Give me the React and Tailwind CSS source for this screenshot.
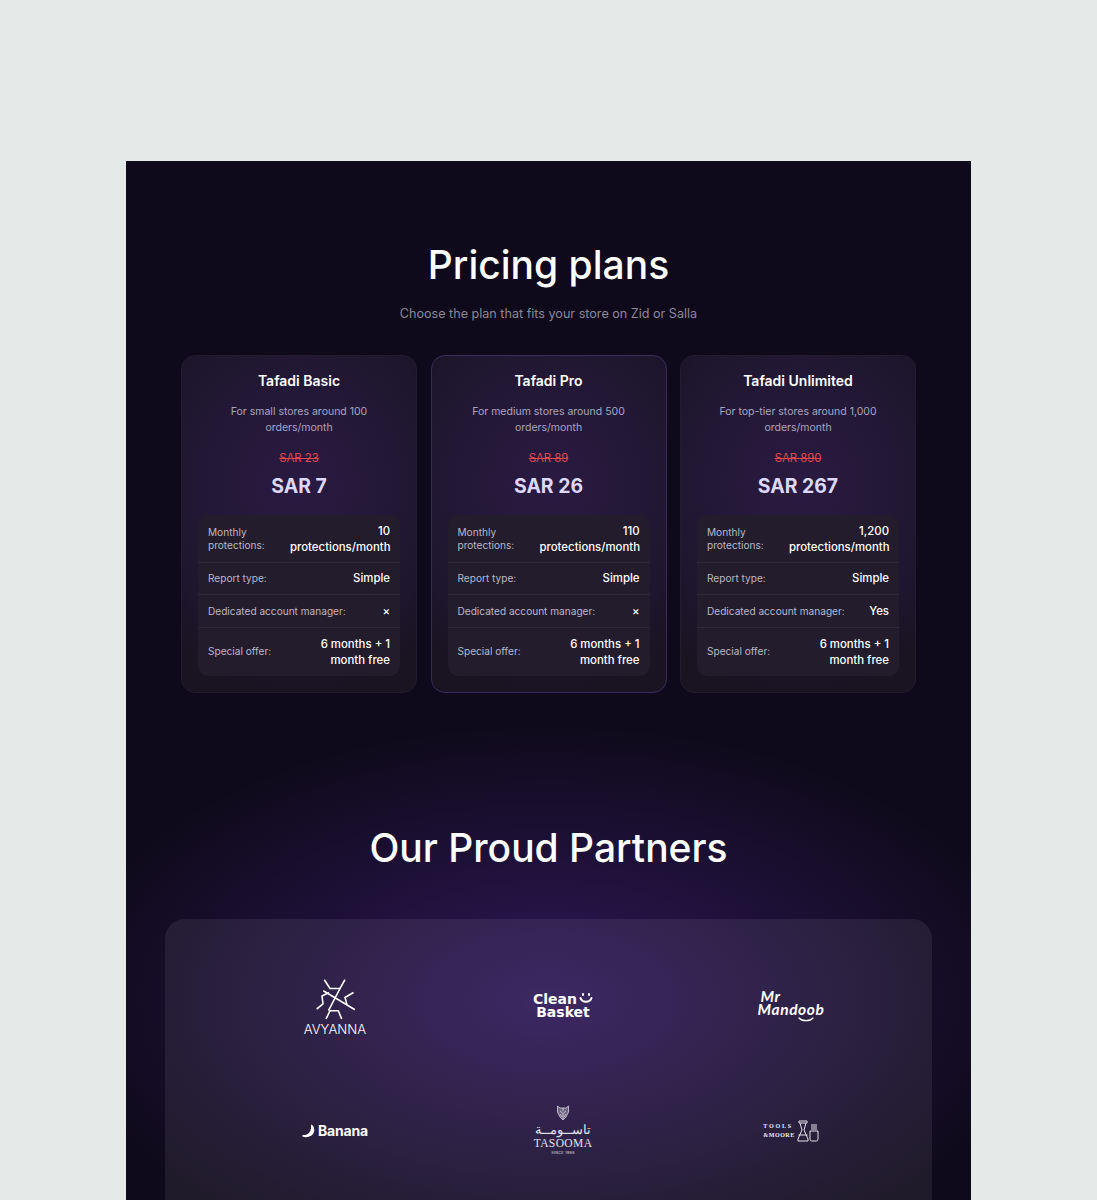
const plans = [
  {
    name: "Tafadi Basic",
    desc: "For small stores around 100 orders/month",
    oldPrice: "SAR 23",
    price: "SAR 7",
    count: "10",
    manager: "×",
  },
  {
    name: "Tafadi Pro",
    desc: "For medium stores around 500 orders/month",
    oldPrice: "SAR 89",
    price: "SAR 26",
    count: "110",
    manager: "×",
    featured: true,
  },
  {
    name: "Tafadi Unlimited",
    desc: "For top-tier stores around 1,000 orders/month",
    oldPrice: "SAR 890",
    price: "SAR 267",
    count: "1,200",
    manager: "Yes",
  },
];

function PlanCard({ plan }) {
  return (
    <div
      className={`rounded-[14px] border bg-[radial-gradient(ellipse_190px_210px_at_50%_38%,#2a1a42,#1f1730_70%,#191322)] px-4 pt-[15px] pb-4 ${
        plan.featured ? "border-[#3a2d5c]" : "border-[#231b30]"
      }`}
    >
      <h3 className="text-center text-[14px] leading-5 font-semibold text-white">{plan.name}</h3>
      <p className="mx-auto mt-[13px] max-w-[180px] text-center text-[10.5px] leading-4 text-[#aba5bf]">{plan.desc}</p>
      <p className="mt-[14px] text-center text-[11.3px] leading-4 text-[#e5484d] line-through">{plan.oldPrice}</p>
      <p className="mt-[6px] text-center text-[19.4px] leading-7 font-bold text-[#ddd8fb]">{plan.price}</p>

      <div className="mt-[15px] rounded-[10px] bg-[#221c2d] text-[10.1px] text-[#bcb8c6]">
        <div className="flex h-[48px] items-center justify-between border-b border-[#2e2838] px-[10px] pt-px">
          <span className="w-[60px] leading-[13px]">Monthly protections:</span>
          <span className="w-[100px] text-right text-[11.4px] leading-4 font-medium whitespace-pre-line text-white">
            {plan.count}
            {"\n"}protections/month
          </span>
        </div>
        <div className="flex h-[32px] items-center justify-between border-b border-[#2e2838] px-[10px] pt-px">
          <span>Report type:</span>
          <span className="text-[11.4px] font-medium text-white">Simple</span>
        </div>
        <div className="flex h-[33px] items-center justify-between border-b border-[#2e2838] px-[10px] pt-px">
          <span>Dedicated account manager:</span>
          <span className="text-[11.4px] font-medium text-white">{plan.manager}</span>
        </div>
        <div className="flex h-[48px] items-center justify-between px-[10px]">
          <span>Special offer:</span>
          <span className="w-[80px] text-right text-[11.4px] leading-4 font-medium text-white">6 months + 1 month free</span>
        </div>
      </div>
    </div>
  );
}

function AvyannaLogo() {
  return (
    <div className="flex flex-col items-center pt-[4px]">
      <svg width="40" height="41" viewBox="25 10 40 41" fill="none" stroke="white" strokeWidth="1.6">
        <path d="M34.3 10.7 L40 19.5 H50 L55 10.7" />
        <path d="M50 19.5 L38.5 41.7" />
        <path d="M33.3 21.7 L65 40.7" />
        <path d="M39 23.5 L32 27 L33 35 L26.7 40" />
        <path d="M63.5 23.5 L55 28.5 L57 36" />
        <path d="M36 50 L40 41.7 H48.3 L51.7 50" />
      </svg>
      <span className="mt-[2px] text-[13.2px] leading-[14px] font-light text-white">AVYANNA</span>
    </div>
  );
}

function CleanBasketLogo() {
  return (
    <div className="flex flex-col items-center font-['DejaVu_Sans'] text-[14px] leading-[13px] font-bold text-white">
      <div className="flex items-center gap-[2px]">
        <span>Clean</span>
        <svg width="14" height="12" viewBox="0 0 14 12" fill="none" stroke="white" strokeWidth="2" strokeLinecap="round">
          <path d="M4 1 V2 M10 1 V2" />
          <path d="M1.5 5 C3 10, 11 10, 12.5 5" />
        </svg>
      </div>
      <span>Basket</span>
    </div>
  );
}

function MandoobLogo() {
  return (
    <div className="flex flex-col font-['Lato'] text-[15.5px] leading-[13px] font-bold text-white italic">
      <span className="pl-[3px] tracking-[0.5px]">Mr</span>
      <span className="tracking-[0.6px]">Mandoob</span>
      <svg className="mt-[1px] mr-[11px] self-end" width="16" height="5" viewBox="0 0 16 5" fill="none" stroke="white" strokeWidth="1.2" strokeLinecap="round">
        <path d="M1 1 C4 4.5, 12 4.5, 15 1" />
      </svg>
    </div>
  );
}

function BananaLogo() {
  return (
    <div className="flex items-center gap-[3px]">
      <svg width="13" height="14" viewBox="0 0 13 14" fill="white">
        <path d="M9 0.5 C11 1, 13 4, 12 8 C11 12, 5 14.5, 0.5 12.5 C0 12, 0.5 11, 1.5 11 C5 11.5, 10 8, 9 0.5 Z" />
      </svg>
      <span className="text-[14px] leading-4 font-bold tracking-[-0.2px] text-white">Banana</span>
    </div>
  );
}

function TasoomaLogo() {
  return (
    <div className="flex flex-col items-center text-[#e6e1ee]">
      <svg width="14" height="16" viewBox="0 0 14 16" fill="none" stroke="#d8d2e2" strokeWidth="0.8">
        <path d="M1.5 1 L4 3 H10 L12.5 1 L12.5 7 L10 12 L7 15 L4 12 L1.5 7 Z" fill="#6f6680" />
        <path d="M4 6 L6.5 8 M10 6 L7.5 8 M7 8 V14 M4 9 L6 12 M10 9 L8 12 M7 3 V6" />
      </svg>
      <span className="mt-[1px] font-['DejaVu_Sans'] text-[13px] leading-[15px] font-light" dir="rtl">تاســومــة</span>
      <span className="font-['Liberation_Serif'] text-[11.5px] leading-[12px] tracking-[0.4px]">TASOOMA</span>
      <span className="mt-[2px] text-[3.5px] leading-[5px] tracking-[0.4px]">SINCE 1998</span>
    </div>
  );
}

function ToolsLogo() {
  return (
    <div className="flex items-center gap-[2px] text-[#f0ecf4]">
      <div className="font-['Liberation_Serif'] text-[6px] leading-[9px] font-bold">
        <div className="tracking-[1.8px]">TOOLS</div>
        <div className="tracking-[0.5px]">&amp;MOORE</div>
      </div>
      <svg width="22" height="22" viewBox="0 0 22 22" fill="none" stroke="#e6e1ee" strokeWidth="1">
        <path d="M2 1 H10 V3 H2 Z" />
        <path d="M3 3 L5 10 L1 19 V21 H11 V19 L7 10 L9 3" />
        <path d="M1.5 15 H10.5" />
        <path d="M13 11 H21 V19 C21 20.5, 20 21, 19 21 H15 C14 21, 13 20.5, 13 19 Z" />
        <path d="M15 4 V10 M17 4 V10 M19 4 V10" />
      </svg>
    </div>
  );
}

export default function App() {
  return (
    <div className="h-[1200px] overflow-hidden bg-[#e5e9e8] pt-[161px] font-['Inter',sans-serif]">
      <main className="mx-auto h-[1300px] w-[845px] bg-[#0f0a1b] bg-[radial-gradient(ellipse_490px_275px_at_50%_839px,#2e1858,transparent)]">
        <section className="px-[55px] pt-20">
          <h1 className="text-center text-[39px] leading-[48px] font-medium text-white">Pricing plans</h1>
          <p className="mt-[15px] text-center text-[12.6px] leading-5 text-[#8c8798]">
            Choose the plan that fits your store on Zid or Salla
          </p>
          <div className="mt-[31px] grid grid-cols-3 gap-[13.5px]">
            {plans.map((plan) => (
              <PlanCard key={plan.name} plan={plan} />
            ))}
          </div>
        </section>

        <section className="mt-[131px]">
          <h2 className="text-center text-[39px] leading-[48px] font-medium text-white">Our Proud Partners</h2>
          <div className="mx-[39px] mt-[47px] h-[380px] rounded-[20px] bg-white/[0.07] pt-6 pl-14">
            <div className="grid auto-rows-[125px] grid-cols-[228px_228px_228px] place-items-center">
              <AvyannaLogo />
              <CleanBasketLogo />
              <MandoobLogo />
              <BananaLogo />
              <TasoomaLogo />
              <ToolsLogo />
            </div>
          </div>
        </section>
      </main>
    </div>
  );
}
